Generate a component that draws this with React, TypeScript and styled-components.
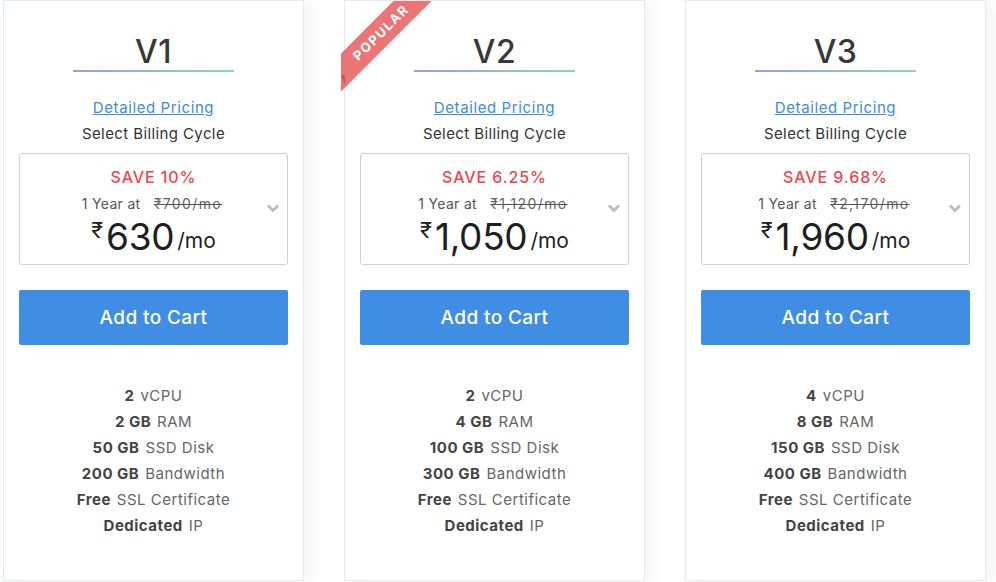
import styled, { createGlobalStyle } from 'styled-components';

const GlobalStyle = createGlobalStyle`
  html, body {
    margin: 0;
    padding: 0;
    background: #ffffff;
  }
  body {
    font-family: Inter, "Noto Sans", "DejaVu Sans", sans-serif;
    color: #333;
  }
  * { box-sizing: border-box; }
`;

const Page = styled.div`
  display: grid;
  grid-template-columns: repeat(3, 301px);
  column-gap: 40px;
  padding: 0 3px;
  width: 996px;
  height: 582px;
  overflow: hidden;
`;

const Card = styled.div`
  position: relative;
  height: 581px;
  background: #fff;
  border: 1px solid #e4eaf2;
  box-shadow: 8px 2px 14px rgba(0, 0, 0, 0.045);
  display: flex;
  flex-direction: column;
  align-items: center;
  padding: 32px 15px 0;
`;

const Title = styled.h2`
  margin: 0;
  width: 161px;
  text-align: center;
  font-size: 32px;
  font-weight: 500;
  line-height: 37px;
  letter-spacing: 0.5px;
  color: #383838;

  &::after {
    content: '';
    display: block;
    height: 2px;
    background: linear-gradient(90deg, #9aa0cf 0%, #8fd6b6 100%);
  }
`;

const DetailLink = styled.a`
  margin-top: 26px;
  font-size: 15px;
  line-height: 20px;
  letter-spacing: 0.6px;
  color: #3c8de2;
  text-decoration: underline;
  cursor: pointer;
`;

const BillingLabel = styled.div`
  margin-top: 6px;
  font-size: 15px;
  line-height: 20px;
  letter-spacing: 0.4px;
  color: #333;
`;

const Cycle = styled.div`
  position: relative;
  margin-top: 9px;
  width: 269px;
  height: 112px;
  border: 1px solid #cfcfcf;
  border-radius: 3px;
  display: flex;
  flex-direction: column;
  align-items: center;
  padding-top: 12px;
`;

const Save = styled.div`
  font-size: 16px;
  font-weight: 500;
  letter-spacing: 0.9px;
  line-height: 22px;
  color: #f2444c;
`;

const Yearly = styled.div`
  margin-top: 6px;
  font-size: 14px;
  line-height: 20px;
  letter-spacing: 0.3px;
  color: #555;

  s {
    margin-left: 6px;
    padding: 0 3px;
    letter-spacing: 1.4px;
    color: #666;
    text-decoration-color: #555;
  }
`;

const Price = styled.div`
  display: flex;
  align-items: flex-start;
  margin-top: 1px;
  color: #1f1f1f;
  line-height: 44px;
`;

const Rupee = styled.span`
  font-size: 22px;
  line-height: 30px;
  margin-right: 3px;
`;

const Amount = styled.span`
  font-size: 37px;
  font-weight: 400;
  letter-spacing: -0.3px;
`;

const PerMonth = styled.span`
  align-self: flex-end;
  font-size: 21px;
  line-height: 36px;
  margin-left: 3px;
`;

const Chevron = styled.svg`
  position: absolute;
  right: 7px;
  top: 49px;
`;

const CartButton = styled.button`
  margin-top: 25px;
  width: 269px;
  height: 55px;
  border: 0;
  border-radius: 2px;
  background: #3f8ee3;
  color: #fff;
  font-family: inherit;
  font-size: 19px;
  font-weight: 500;
  letter-spacing: 0.4px;
  cursor: pointer;
`;

const Features = styled.ul`
  list-style: none;
  margin: 38px 0 0;
  padding: 0;
  text-align: center;
`;

const Feature = styled.li`
  font-size: 15px;
  line-height: 26px;
  color: #666;
  letter-spacing: 0.5px;

  b {
    color: #444;
    font-weight: 700;
    margin-right: 6px;
  }
`;

const RibbonClip = styled.div`
  position: absolute;
  left: -4px;
  top: 0;
  width: 110px;
  height: 100px;
  overflow: hidden;
`;

const Ribbon = styled.div`
  position: absolute;
  left: -30px;
  top: 18px;
  width: 140px;
  height: 27px;
  background: #eb7575;
  color: #fff;
  font-size: 13px;
  font-weight: 700;
  letter-spacing: 1.5px;
  line-height: 27px;
  text-align: center;
  transform: rotate(-45deg);
`;

const RibbonFold = styled.div`
  position: absolute;
  left: -4px;
  top: 74px;
  width: 0;
  height: 0;
  border-top: 10px solid #c45858;
  border-left: 4px solid transparent;
`;

type Plan = {
  name: string;
  save: string;
  was: string;
  price: string;
  popular?: boolean;
  specs: [string, string][];
};

const plans: Plan[] = [
  {
    name: 'V1',
    save: 'SAVE 10%',
    was: '₹700/mo',
    price: '630',
    specs: [
      ['2', 'vCPU'],
      ['2 GB', 'RAM'],
      ['50 GB', 'SSD Disk'],
      ['200 GB', 'Bandwidth'],
      ['Free', 'SSL Certificate'],
      ['Dedicated', 'IP'],
    ],
  },
  {
    name: 'V2',
    save: 'SAVE 6.25%',
    was: '₹1,120/mo',
    price: '1,050',
    popular: true,
    specs: [
      ['2', 'vCPU'],
      ['4 GB', 'RAM'],
      ['100 GB', 'SSD Disk'],
      ['300 GB', 'Bandwidth'],
      ['Free', 'SSL Certificate'],
      ['Dedicated', 'IP'],
    ],
  },
  {
    name: 'V3',
    save: 'SAVE 9.68%',
    was: '₹2,170/mo',
    price: '1,960',
    specs: [
      ['4', 'vCPU'],
      ['8 GB', 'RAM'],
      ['150 GB', 'SSD Disk'],
      ['400 GB', 'Bandwidth'],
      ['Free', 'SSL Certificate'],
      ['Dedicated', 'IP'],
    ],
  },
];

const PlanCard = ({ plan }: { plan: Plan }) => (
  <Card>
    {plan.popular && (
      <>
        <RibbonClip>
          <Ribbon>POPULAR</Ribbon>
        </RibbonClip>
        <RibbonFold />
      </>
    )}
    <Title>{plan.name}</Title>
    <DetailLink>Detailed Pricing</DetailLink>
    <BillingLabel>Select Billing Cycle</BillingLabel>
    <Cycle>
      <Save>{plan.save}</Save>
      <Yearly>
        1 Year at <s>{plan.was}</s>
      </Yearly>
      <Price>
        <Rupee>₹</Rupee>
        <Amount>{plan.price}</Amount>
        <PerMonth>/mo</PerMonth>
      </Price>
      <Chevron width="14" height="10" viewBox="0 0 14 10">
        <path d="M2 2.5 L7 7.5 L12 2.5" fill="none" stroke="#bdbdbd" strokeWidth="3" />
      </Chevron>
    </Cycle>
    <CartButton>Add to Cart</CartButton>
    <Features>
      {plan.specs.map(([b, t]) => (
        <Feature key={t}>
          <b>{b}</b>
          {t}
        </Feature>
      ))}
    </Features>
  </Card>
);

export default function App() {
  return (
    <>
      <GlobalStyle />
      <Page>
        {plans.map((p) => (
          <PlanCard key={p.name} plan={p} />
        ))}
      </Page>
    </>
  );
}
